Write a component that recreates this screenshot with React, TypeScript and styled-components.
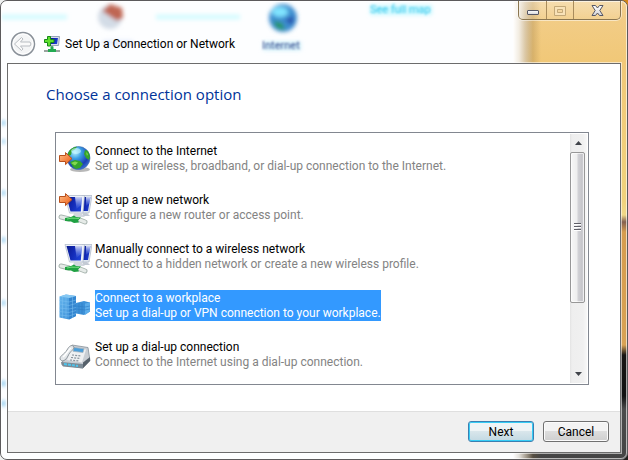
import React, { useState } from "react";
import styled, { createGlobalStyle } from "styled-components";

const Global = createGlobalStyle`
  * { box-sizing: border-box; }
  body { margin: 0; background: linear-gradient(90deg, #eef0f0 50%, #0000 50%), linear-gradient(#cf8418 50%, #22201e 50%); }
  button, input { font: inherit; }
`;

const Frame = styled.main`
  position: relative;
  display: flex;
  flex-direction: column;
  min-height: 100vh;
  padding: 0 6px 6px;
  border: 1px solid #5c5a5c;
  border-radius: 7px;
  overflow: hidden;
  background: #fdfeff;
  color: #000;
  font: 12px/15px Roboto, "Open Sans", sans-serif;
`;

const Backdrop = styled.div`
  position: absolute;
  inset: 0;
  overflow: hidden;
  pointer-events: none;
  &::after {
    content: "";
    position: absolute;
    inset: 0;
    border: 1px solid #ffffffa0;
    border-radius: 6px;
  }
`;

const Desk = styled.div`
  position: absolute;
  top: 0;
  right: 0;
  bottom: 0;
  width: 114px;
  background:
    linear-gradient(90deg, #fff 0, #ffffffd0 6px, #fff0 20px),
    linear-gradient(90deg, #8a6c3c90 0, #8a6c3c80 12px, #8a6c3c00 28px),
    linear-gradient(180deg, #f2ce8c 0, #f1c878 60px, #f0d27c 200px, #f0d888 214px, #84604f 221px, #d69c4e 231px, #d8a254 344px, #171513 354px, #111 395px, #4b4b4b 408px, #444 460px);
`;

const Scenery = styled.svg`
  position: absolute;
  left: 0;
  top: 0;
`;

const TitleBar = styled.header`
  position: relative;
  display: flex;
  align-items: flex-end;
  height: 62px;
  padding: 0 0 6px 3px;
`;

const BackButton = styled.button`
  width: 26px;
  height: 26px;
  padding: 0;
  border: 0;
  background: none;
`;

const Title = styled.h1`
  display: flex;
  align-items: center;
  gap: 5px;
  height: 26px;
  margin: 0 0 0 8px;
  padding-top: 1px;
  font-size: 12px;
  font-weight: 400;
  text-shadow: 0 0 6px #fff;
`;

const Captions = styled.div`
  position: absolute;
  top: 0;
  right: 0;
  display: flex;
  height: 19px;
  border: 1px solid #8b7650;
  border-top: 0;
  border-radius: 0 0 5px 5px;
  box-shadow: 0 0 0 1px #ffffff80;
`;

const Caption = styled.button<{ $wide?: boolean }>`
  display: flex;
  align-items: center;
  justify-content: center;
  width: ${(p) => (p.$wide ? 47 : 27)}px;
  padding: 0;
  border: 0;
  border-left: 1px solid #a98c5c;
  background: linear-gradient(#ffffff50, #ffffff18);
  &:first-child { border-left: 0; }
`;

const Client = styled.section`
  position: relative;
  display: flex;
  flex: 1;
  flex-direction: column;
  border: 1px solid #6c6c6c;
  background: #fff;
  box-shadow: 0 0 0 1px #ffffff90;
`;

const Body = styled.div`
  display: flex;
  flex: 1;
  flex-direction: column;
  padding: 19px 31px 26px 47px;
`;

const Heading = styled.h2`
  margin: 0 0 27px -9px;
  color: #003399;
  font-family: "Open Sans", "Noto Sans", sans-serif;
  font-size: 15px;
  font-weight: 400;
  line-height: 22px;
`;

const ListBox = styled.div`
  display: flex;
  flex: 1;
  padding: 1px;
  border: 1px solid #828790;
`;

const Options = styled.div`
  flex: 1;
  min-width: 0;
`;

const Option = styled.label`
  display: flex;
  align-items: center;
  gap: 3px;
  height: 49px;
  padding-left: 1px;
`;

const Radio = styled.input`
  position: absolute;
  opacity: 0;
  pointer-events: none;
`;

const OptionText = styled.span<{ $selected: boolean }>`
  display: flex;
  flex-direction: column;
  padding-top: 1px;
  color: ${(p) => (p.$selected ? "#fff" : "#000")};
  background: ${(p) => (p.$selected ? "#3399ff" : "transparent")};
  white-space: nowrap;
`;

const Detail = styled.span<{ $selected: boolean }>`
  color: ${(p) => (p.$selected ? "#fff" : "#838383")};
`;

const ScrollBar = styled.div`
  display: flex;
  flex-direction: column;
  width: 17px;
  background: linear-gradient(90deg, #e3e3e3, #eeeeee 2px, #f0f0f0 13px, #f8f8f8);
`;

const ScrollButton = styled.button`
  display: flex;
  align-items: center;
  justify-content: center;
  height: 18px;
  padding: 0;
  border: 0;
  background: none;
`;

const Track = styled.div`
  flex: 1;
`;

const Thumb = styled.div`
  display: flex;
  align-items: center;
  justify-content: center;
  width: 15px;
  height: 71%;
  border: 1px solid #979797;
  border-radius: 2px;
  background: linear-gradient(90deg, #f7f7f7, #eeeeee 6px, #d2d2d6 7px, #c5c5ca 11px, #dadade);
  box-shadow: inset 0 0 0 1px #ffffffa0;
`;

const Footer = styled.footer`
  display: flex;
  justify-content: flex-end;
  gap: 9px;
  height: 41px;
  padding: 9px 11px;
  border-top: 1px solid #dfdfdf;
  background: #f0f0f0;
`;

const PushButton = styled.button<{ $primary?: boolean }>`
  width: 66px;
  height: 21px;
  padding: 2px 0 0;
  border: 1px solid ${(p) => (p.$primary ? "#3c7fb1" : "#707070")};
  border-radius: 3px;
  background: ${(p) =>
    p.$primary
      ? "linear-gradient(#eef4f6 0 45%, #d9e6eb 50%, #c2d9e3)"
      : "linear-gradient(#f3f3f3 0 45%, #dddddd 50%, #cfcfcf)"};
  box-shadow: inset 0 0 0 1px ${(p) => (p.$primary ? "#36cdf6" : "#fbfbfb")};
  line-height: 17px;
`;

const Defs = () => (
  <svg width="0" height="0" aria-hidden="true" display="block">
    <defs>
      <radialGradient id="globe" cx=".35" cy=".25" r=".8">
        <stop offset="0" stopColor="#b9f3ff" />
        <stop offset=".35" stopColor="#3b9fe4" />
        <stop offset=".75" stopColor="#1b3fb4" />
        <stop offset="1" stopColor="#3c74d6" />
      </radialGradient>
      <linearGradient id="arrow" x1="0" y1="0" x2="1" y2="1">
        <stop offset="0" stopColor="#ffc08a" />
        <stop offset=".6" stopColor="#f4813f" />
        <stop offset="1" stopColor="#e5601c" />
      </linearGradient>
      <linearGradient id="screen" x1="0" y1="0" x2="1" y2=".4">
        <stop offset="0" stopColor="#0a1a8c" />
        <stop offset=".5" stopColor="#1229b4" />
        <stop offset="1" stopColor="#1d3fd2" />
      </linearGradient>
      <linearGradient id="shine" x2="0" y2="1">
        <stop offset="0" stopColor="#fff" stopOpacity=".8" />
        <stop offset="1" stopColor="#7fa0ff" stopOpacity=".1" />
      </linearGradient>
      <linearGradient id="tower" x2="1" y2="1">
        <stop offset="0" stopColor="#64b5ee" />
        <stop offset="1" stopColor="#3a8bd4" />
      </linearGradient>
      <linearGradient id="caption" x2="0" y2="1">
        <stop offset="0" stopColor="#fff" />
        <stop offset="1" stopColor="#d4d4d8" />
      </linearGradient>
      <filter id="soft" x="-50%" y="-50%" width="200%" height="200%">
        <feGaussianBlur stdDeviation="2" />
      </filter>
      <filter id="hazy" x="-20%" y="-50%" width="140%" height="200%">
        <feGaussianBlur stdDeviation="1.3" />
      </filter>
    </defs>
  </svg>
);

const Arrow = ({ y }: { y: number }) => (
  <path
    transform={`translate(0 ${y})`}
    d="M1.500 3.500h6V.6l6.500 6-6.500 6V9.500h-6z"
    fill="url(#arrow)"
    stroke="#b9501c"
    strokeLinejoin="round"
  />
);

const GlobeIcon = () => (
  <svg width="34" height="34" viewBox="0 0 34 34" aria-hidden="true">
    <ellipse cx="22" cy="27.500" rx="10" ry="2.500" fill="#b8b8b8" />
    <circle cx="20.500" cy="16" r="11.500" fill="url(#globe)" stroke="#3b69a9" strokeWidth=".6" />
    <path d="M10 11c2-4 5-6 9-6.500l-2 3-3 1.500-1 4-3 1z M12 20l5-2 5 1 3 3-3 4-4 1-3-2z M27 8l3 1 2 5-1 4-3-2-2-4z" fill="#35a52b" />
    <path d="M13 21l4-1.500 3 1-3 3z M28 10l2 2-1 2z" fill="#83d94f" />
    <ellipse cx="18" cy="9" rx="5" ry="3" fill="#c9f8ff" opacity=".6" />
    <Arrow y={10} />
  </svg>
);

const Computers = () => (
  <g>
    <path d="M24 4.500h10L31 22h-8z" fill="#dfe6ef" stroke="#aab5c6" strokeWidth=".7" />
    <path d="M26 6h6.500L30 20h-5z" fill="url(#screen)" />
    <path d="M28 6h4.500l-1 6-3.500 3z" fill="url(#shine)" />
    <path d="M25 22h4l3 3h-7z" fill="#c3cad4" />
    <path d="M7 4.500h19.500L25 22H11.500z" fill="#eef2f8" stroke="#aab5c6" strokeWidth=".7" />
    <path d="M8.500 6H24l-1.200 14.500H12.500z" fill="url(#screen)" />
    <path d="M17 6h7l-.8 8-4.700 4z" fill="url(#shine)" />
    <path d="M16 22h7l4 4H15z" fill="#d2d7de" />
    <path d="M3 26l8 2M22 29l5 2" fill="none" stroke="#a8b5af" strokeWidth="5" strokeLinecap="round" />
    <path d="M3 26l7 1.500M22 29l5 2" fill="none" stroke="#e6ebe8" strokeWidth="3" strokeLinecap="round" />
    <path d="M7 27l6-1 3-1.500 2 1.500 5 .5-3 3 1 2-5 .5-3-1.500-6-.5z" fill="#1fa042" />
    <path d="M9 28l5-1 7 .5" fill="none" stroke="#6fdc7a" strokeWidth="1.200" />
  </g>
);

const NetworkIcon = ({ arrow }: { arrow?: boolean }) => (
  <svg width="34" height="34" viewBox="0 0 34 34" aria-hidden="true">
    <Computers />
    {arrow && <Arrow y={2} />}
  </svg>
);

const WorkplaceIcon = () => (
  <svg width="34" height="34" viewBox="0 0 34 34" aria-hidden="true">
    <path d="M18 14l8-2 6 1.500v9L26 26l-8-1.500z" fill="#3d91d8" />
    <path d="M27 14.500l5-1v9L27 26z" fill="#5cadea" />
    <path d="M18 17l9 1 5-1M18 20l9 1 5-1M21 14v10M24 14v11" stroke="#2f7cc2" strokeWidth=".6" fill="none" />
    <path d="M1.500 7.500L8 5.500l10 1.500v20l-7 3.500-9.500-2z" fill="url(#tower)" />
    <path d="M11 9l7-2v20l-7 3.500z" fill="#3486d0" />
    <path d="M1.500 7.500L8 5.500 18 7l-7 2z" fill="#86c8f3" />
    <path d="M1.500 11.500l9.500 1.500 7-2M1.500 15l9.500 1.500 7-2M1.500 19l9.500 1 7-1.500M1.500 22.500l9.500 1 7-2M1.500 26l9.500 1 7-2.500M4.500 8v21M8 8.500v21M14.500 8v21" stroke="#7cc0f1" strokeWidth=".5" fill="none" />
  </svg>
);

const PhoneIcon = () => (
  <svg width="34" height="34" viewBox="0 0 34 34" aria-hidden="true">
    <path d="M10 12l4-5 16 2.500 2 13-7 7.500-21-3 1-6z" fill="#c9ced4" stroke="#7a858f" strokeWidth=".7" />
    <path d="M13 10l15 1.500-4 13-15-2.500z" fill="#eef0f2" />
    <path d="M16 9.500l10 1.200-1 3.800-10-1.200z" fill="#4a9fdb" stroke="#a6b2ba" strokeWidth=".7" />
    <path d="M14 17l9 1M13 19.500l9 1M12 22l9 1" stroke="#8a949d" strokeWidth="1.200" strokeDasharray="2 1.200" />
    <path d="M25 24.500l7-5.500v4l-7 7z" fill="#56616b" />
    <path d="M3 24l22 2v4.500L5 28.500q-2-2-2-4.500z" fill="#7c8a95" />
    <path d="M6 26l14 2" stroke="#4cc4ec" strokeWidth="2" strokeDasharray="3 1" />
    <path d="M2 21c0-4 4-4 7-9 2-4 5-6 7-3 0 3-4 4-6 9-2 4-6 7-8 3z" fill="#e4e8eb" stroke="#7c858c" strokeWidth=".8" />
    <path d="M5 19c3-2 5-7 8-9" stroke="#fff" strokeWidth="1.500" fill="none" />
  </svg>
);

const SetupIcon = () => (
  <svg width="16" height="17" viewBox="0 0 16 17" aria-hidden="true">
    <path d="M5 .5h10.500l-1 9H6z" fill="#d8dfec" stroke="#8391aa" strokeWidth=".8" />
    <path d="M7 2h7l-1 6H7z" fill="url(#screen)" />
    <path d="M8 10v4M0 15h16" stroke="#9aa39f" strokeWidth="2" />
    <path d="M8 10.500v3M4 14.500h8" stroke="#22aa51" strokeWidth="3" />
    <path d="M3.500.5h3v3H10v3H6.500V10h-3V6.500H.5v-3h3z" fill="#5fe02e" stroke="#168a18" />
  </svg>
);

const items = [
  { name: "Connect to the Internet", detail: "Set up a wireless, broadband, or dial-up connection to the Internet.", icon: <GlobeIcon /> },
  { name: "Set up a new network", detail: "Configure a new router or access point.", icon: <NetworkIcon arrow /> },
  { name: "Manually connect to a wireless network", detail: "Connect to a hidden network or create a new wireless profile.", icon: <NetworkIcon /> },
  { name: "Connect to a workplace", detail: "Set up a dial-up or VPN connection to your workplace.", icon: <WorkplaceIcon /> },
  { name: "Set up a dial-up connection", detail: "Connect to the Internet using a dial-up connection.", icon: <PhoneIcon /> },
];

export default function App() {
  const [selected, setSelected] = useState(3);
  return (
    <>
      <Global />
      <Frame>
        <Defs />
        <Backdrop aria-hidden="true">
          <Desk />
          <Scenery width="520" height="460">
            <g filter="url(#soft)">
              <path d="M0 16h66M155 16h84" stroke="#d4fbff" strokeWidth="5" />
              <circle cx="109" cy="16" r="12" fill="#d3dce6" />
              <path d="M101 10l8-7 12 4 1 10-6 3z" fill="#bf6652" />
              <circle cx="282" cy="17" r="14" fill="#3e8ed0" />
              <ellipse cx="279" cy="11" rx="8" ry="5" fill="#80e4ff" />
              <path d="M272 20l9 2 3 7-8-2z" fill="#259654" />
              <path d="M284 19l9-4-2 9z" fill="#2844a8" />
              <path d="M102 42h30" stroke="#dfe8fa" strokeWidth="5" />
              <path d="M262 45h38" stroke="#d4f2fb" strokeWidth="9" />
              <path d="M369 9h62" stroke="#c9f8ff" strokeWidth="10" />
              <path d="M2 120v4M2 139v3M2 190v4M2 237v4M2 300v4M2 380v5M2 400v5" stroke="#8ecbee" strokeWidth="6" />
            </g>
            <g filter="url(#hazy)" fontSize="11">
              <text x="261" y="48" fill="#3a4f90">Internet</text>
              <text x="369" y="12" fill="#38c8ec">See full map</text>
            </g>
          </Scenery>
        </Backdrop>
        <TitleBar>
          <BackButton aria-label="Back">
            <svg width="26" height="26" viewBox="0 0 26 26" aria-hidden="true" display="block">
              <circle cx="13" cy="13" r="11.500" fill="#f4f5f6" stroke="#8a9199" strokeWidth="1.500" />
              <circle cx="13" cy="13" r="10" fill="none" stroke="#fff" />
              <path d="M4.500 13l7-6.500 1.500 1.500-2.500 3H20q2 2 0 4h-9.500l2.500 3-1.500 1.500z" fill="#fafafa" stroke="#b9bdc2" />
            </svg>
          </BackButton>
          <Title>
            <SetupIcon />
            Set Up a Connection or Network
          </Title>
          <Captions>
            <Caption aria-label="Minimize">
              <svg width="12" height="11" viewBox="0 0 12 11"><rect x=".5" y="5.500" width="11" height="4" rx=".5" fill="url(#caption)" stroke="#555664" /></svg>
            </Caption>
            <Caption aria-label="Maximize" disabled>
              <svg width="12" height="11" viewBox="0 0 12 11"><path d="M.5 1.500h11v9H.5z M3.500 4.500h5v3h-5z" fill="#f8e2b8" fillRule="evenodd" stroke="#c3a878" /></svg>
            </Caption>
            <Caption $wide aria-label="Close">
              <svg width="13" height="11" viewBox="0 0 13 11"><path d="M1 .5h3.500l2 2.500 2-2.500H12L8.800 5.500 12 10.500H8.500l-2-2.500-2 2.500H1l3.200-5z" fill="url(#caption)" stroke="#555664" /></svg>
            </Caption>
          </Captions>
        </TitleBar>
        <Client>
          <Body>
            <Heading id="heading">Choose a connection option</Heading>
            <ListBox>
              <Options role="radiogroup" aria-labelledby="heading">
                {items.map((item, i) => (
                  <Option key={item.name}>
                    <Radio type="radio" name="connection" checked={selected === i} onChange={() => setSelected(i)} />
                    {item.icon}
                    <OptionText $selected={selected === i}>
                      <span>{item.name}</span>
                      <Detail $selected={selected === i}>{item.detail}</Detail>
                    </OptionText>
                  </Option>
                ))}
              </Options>
              <ScrollBar>
                <ScrollButton aria-label="Scroll up">
                  <svg width="7" height="4"><path d="M0 4l3.500-4L7 4z" fill="#40444a" /></svg>
                </ScrollButton>
                <Track>
                  <Thumb>
                    <svg width="7" height="9"><path d="M0 .5h7M0 3.500h7M0 6.500h7" stroke="#606068" /><path d="M0 1.500h7M0 4.500h7M0 7.500h7" stroke="#fff" /></svg>
                  </Thumb>
                </Track>
                <ScrollButton aria-label="Scroll down">
                  <svg width="7" height="4"><path d="M0 0l3.500 4L7 0z" fill="#40444a" /></svg>
                </ScrollButton>
              </ScrollBar>
            </ListBox>
          </Body>
          <Footer>
            <PushButton $primary>Next</PushButton>
            <PushButton>Cancel</PushButton>
          </Footer>
        </Client>
      </Frame>
    </>
  );
}
